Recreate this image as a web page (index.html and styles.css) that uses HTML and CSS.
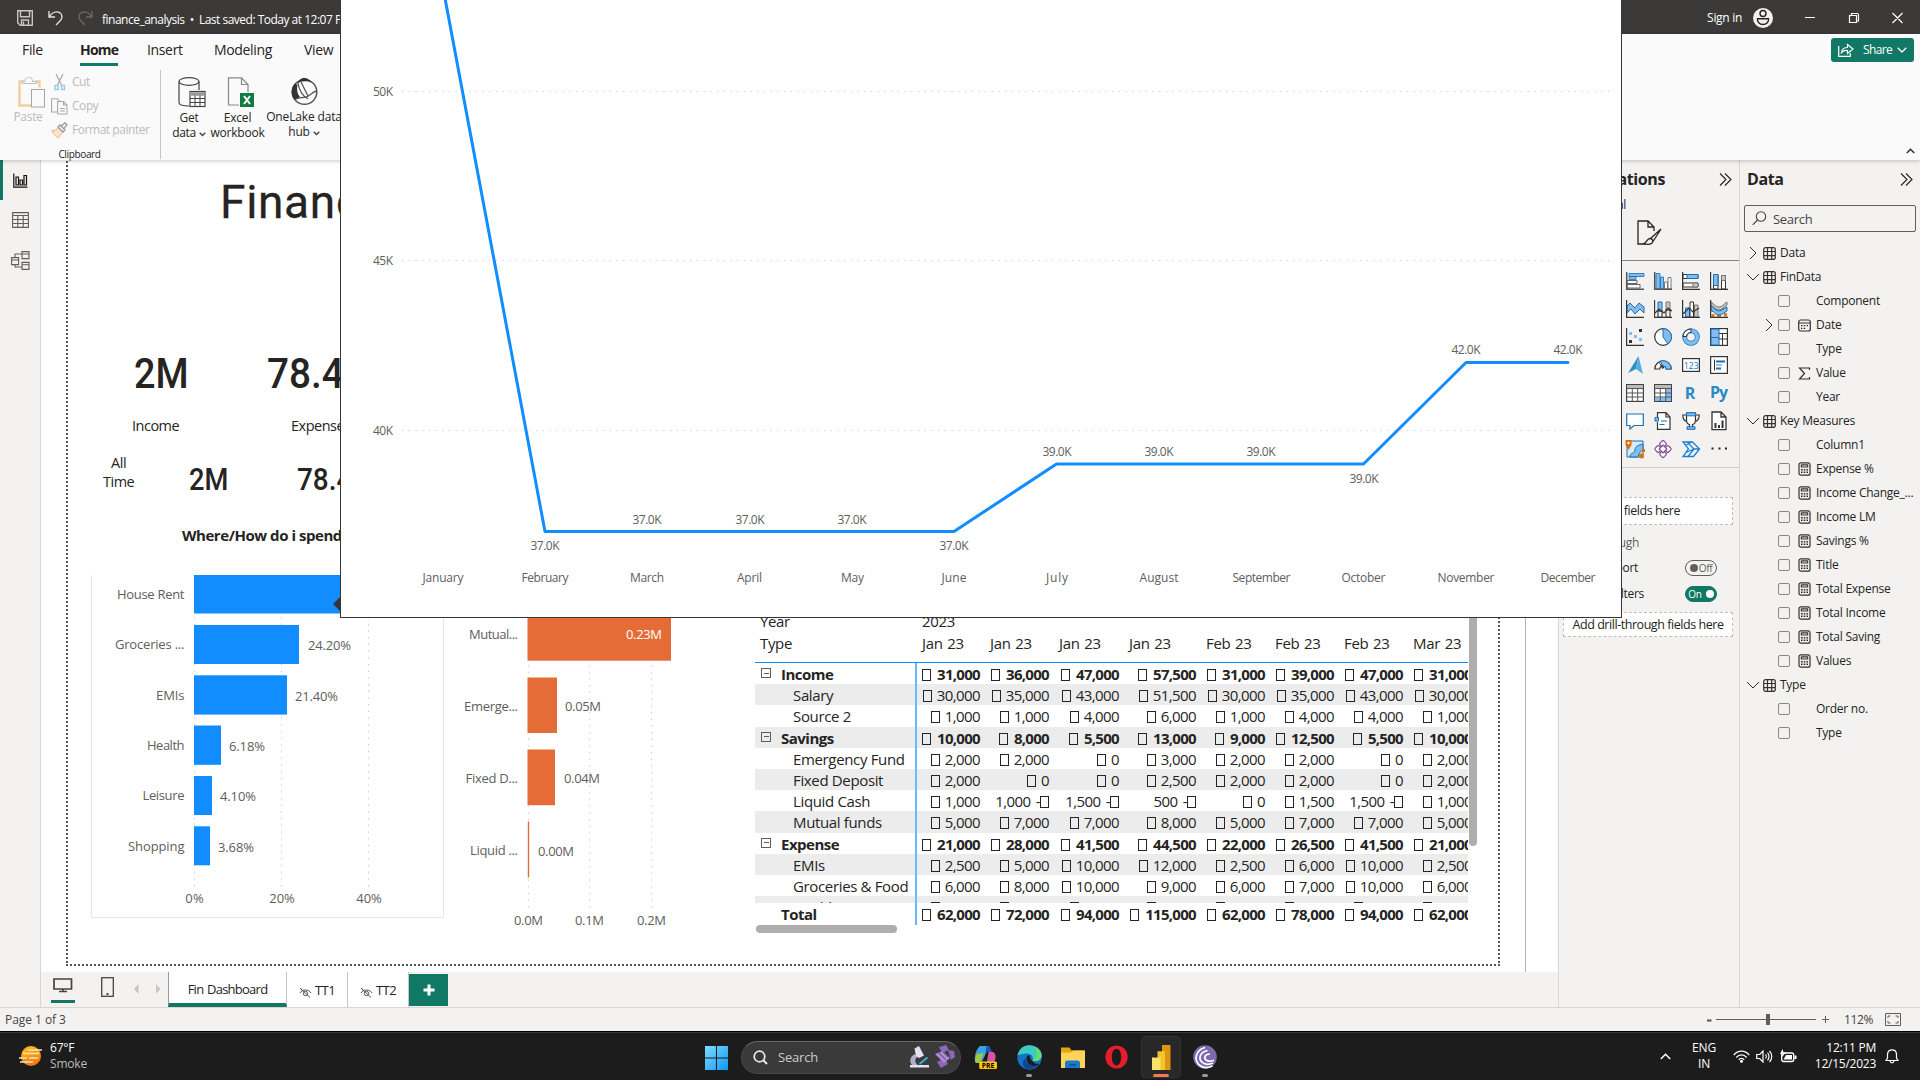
FILE: index.html
```html
<!DOCTYPE html>
<html lang="en">
<head>
<meta charset="utf-8">
<title>finance_analysis</title>
<link rel="stylesheet" href="styles.css">
</head>
<body>
<svg class="defs" width="0" height="0">
  <symbol id="tbl" viewBox="0 0 13 13"><g fill="none" stroke="#323130" stroke-width="1.2"><rect x=".7" y=".7" width="11.6" height="11.6" rx="2"/><path d="M4.5 1v11M8.7 1v11M1 4.5h11M1 8.7h11"/></g></symbol>
  <symbol id="calc" viewBox="0 0 13 14"><g fill="none" stroke="#323130" stroke-width="1.2"><rect x="1" y=".8" width="11" height="12.4" rx="2"/><rect x="3.3" y="2.8" width="6.4" height="2.2" rx=".5"/></g><path d="M3 7h1.6v1.4H3zM5.7 7h1.6v1.4H5.7zM8.4 7H10v1.4H8.400zM3 9.400h1.6v1.6H3zM5.700 9.400h1.6v1.600H5.700zM8.400 9.400H10v1.600H8.400z" fill="#323130"/></symbol>
  <symbol id="down" viewBox="0 0 14 8"><path d="M1 1l6 6 6-6" fill="none" stroke="#323130"/></symbol>
  <symbol id="right" viewBox="0 0 8 14"><path d="M1 1l6 6-6 6" fill="none" stroke="#323130"/></symbol>
  <symbol id="dbl" viewBox="0 0 13 13"><path d="M1 .5l6 6-6 6M6 .5l6 6-6 6" fill="none" stroke="#252423" stroke-width="1.1"/></symbol>
  <symbol id="caret" viewBox="0 0 7 5"><path d="M.7.8l2.800 2.800L6.300.8" fill="none" stroke="#444" stroke-width="1.400"/></symbol>
  <symbol id="hidden" viewBox="0 0 13 11"><g fill="none" stroke="#555" stroke-width="1"><path d="M1 6c2-4 9-4 11 0M3 3.500L1.500 1M1 1l10 9.500"/><circle cx="6.500" cy="6.500" r="2.200"/></g></symbol>
</svg>

<header class="titlebar">
  <svg class="tb-save" width="16" height="16" viewBox="0 0 16 16"><path d="M.7.7h14.600v14.600H3.200L.7 12.800zM3.500.7v6h9v-6M4.500 15v-5h7v5M6.500 11.500V15" fill="none" stroke="#c8c6c4" stroke-width="1.400"/></svg>
  <svg class="tb-undo" width="15" height="16" viewBox="0 0 15 16"><path d="M1 1v6h6M1.500 6.500C4 2.500 8 .8 11.500 2.500c3.500 2 3 6 .5 8.500l-4 4" fill="none" stroke="#e1dfdd" stroke-width="1.400"/></svg>
  <svg class="tb-redo" width="15" height="16" viewBox="0 0 15 16"><path d="M14 1v6H8M13.500 6.500C11 2.500 7 .8 3.500 2.500c-3.500 2-3 6-.5 8.500l4 4" fill="none" stroke="#6a6866" stroke-width="1.400"/></svg>
  <span class="doc">finance_analysis&nbsp; • &nbsp;Last saved: Today at 12:07 PM</span>
  <span class="signin">Sign in</span>
  <svg class="avatar" width="20" height="20" viewBox="0 0 20 20"><circle cx="10" cy="10" r="10" fill="#f3f2f1"/><g fill="none" stroke="#252423" stroke-width="1.400"><circle cx="10" cy="5.500" r="3"/><path d="M4.500 10.800h11c.5 3-2 5.700-5.500 5.700s-6-2.700-5.500-5.700z"/></g></svg>
  <svg class="winctl" width="98" height="12" viewBox="0 0 98 12"><path d="M0 5.500h10M44.500 3.500h7v7h-7zM46.500 3V1.500h5.500q1.500 0 1.500 1.500v6h-2M87.500 1l10 10M97.500 1l-10 10" fill="none" stroke="#fff" stroke-width="1.200"/></svg>
</header>

<section class="ribbon">
  <nav class="menu"><span class="m-file">File</span><span class="m-home">Home</span><span class="m-ins">Insert</span><span class="m-mod">Modeling</span><span>View</span>
    <span class="share"><svg width="16" height="14" viewBox="0 0 16 14"><path d="M.7 3v10.300h11.600V10M3.500 9.500C4 6 6 4.500 9.500 4.500V1.500l5.500 4.500-5.500 4.500v-3C7 7.300 5 7.800 3.500 9.500z" fill="none" stroke="#fff" stroke-width="1.200"/></svg><b>Share</b><svg width="10" height="6" viewBox="0 0 10 6"><path d="M.7.7L5 5 9.300.7" fill="none" stroke="#fff" stroke-width="1.300"/></svg></span>
  </nav>
  <div class="tools">
    <div class="clip">
      <div class="clip-row">
        <div class="paste"><svg width="28" height="31" viewBox="0 0 28 31"><path d="M6 4.500H1.500v24H14M17 4.500h4.500v6" fill="none" stroke="#f3cf9f" stroke-width="2.500"/><path d="M4.500 7.500V5.500h3c0-6 7.500-6 7.500 0h4v2z" transform="translate(-.5 -1)" fill="#fafafa" stroke="#bbb"/><rect x="13.500" y="12.500" width="13" height="17.500" fill="#fafafa" stroke="#a5a5a5"/></svg><span>Paste</span></div>
        <div class="clip-list">
          <span><svg width="17" height="18" viewBox="0 0 17 18"><path d="M5 1l5.500 11M12 1L6.500 12" fill="none" stroke="#aaa" stroke-width="1.300"/><path d="M4 12.500h3v4H4zM10.500 12.500h3v4h-3z" fill="none" stroke="#9bcbea" stroke-width="1.500"/></svg>Cut</span>
          <span><svg width="17" height="17" viewBox="0 0 17 17"><path d="M6 14H.6V.8h5.900l2 2M6.600 3.500h6L16 7v9H6.600zM12.500 3.500V7H16M9 10.500h5M9 13h5" fill="none" stroke="#aaa" stroke-width="1.100"/></svg>Copy</span>
          <span><svg width="17" height="17" viewBox="0 0 17 17"><path d="M.8 8.500c3 .3 5-1 6.500-3L12 10c-2 2-3.500 4-4.500 6C4.500 14.500 2 12 .8 8.500z" fill="#fbe3c8" stroke="#f0b98a"/><path d="M7 5l2-2 5 5-2 2zM10.500 4L14 .8l2 2L13 6.500" fill="#fafafa" stroke="#999" stroke-width="1.300"/></svg>Format painter</span>
        </div>
      </div>
      <div class="clip-label">Clipboard</div>
    </div>
    <div class="big b-get"><svg width="28" height="31" viewBox="0 0 28 31"><ellipse cx="11" cy="4.500" rx="10" ry="3.800" fill="none" stroke="#444" stroke-width="1.200"/><path d="M1 4.500v21c0 2 4 3.500 10 3.500M21 4.500V13" fill="none" stroke="#444" stroke-width="1.200"/><rect x="12" y="14.500" width="15" height="15" fill="#fff" stroke="#444" stroke-width="1.200"/><path d="M12 17h15" stroke="#999" stroke-width="3.500"/><path d="M12 21.500h15M12 25.500h15M17 18.500v11M22 18.500v11" stroke="#444" fill="none"/></svg><span>Get<br>data <svg width="7" height="5"><use href="#caret"/></svg></span></div>
    <div class="big b-xl"><svg width="28" height="31" viewBox="0 0 28 31"><path d="M13 28H2.500V.8h13L22 7.500V15M15.500.8v6.700H22" fill="none" stroke="#888" stroke-width="1.200"/><rect x="14" y="16" width="14" height="14" fill="#107c41"/><path d="M18 19l6 8M24 19l-6 8" stroke="#fff" stroke-width="2"/></svg><span>Excel<br>workbook</span></div>
    <div class="big b-one"><svg width="28" height="30" viewBox="0 0 28 30"><circle cx="14.500" cy="15" r="12.300" fill="#fdfdfd" stroke="#555" stroke-width="1.500"/><path d="M5.500 6.500C1 10 .3 17 4.500 22.500c2 0 4-1 5.500-2.300C7 16.500 6.500 12 7.500 8z" fill="#333"/><path d="M7 6.500C9 2 12 .8 15 1s5 2 6 4.500c-4-2-10-1.500-14 1z" fill="#333"/><path d="M8 6c1 7 5 13 10 16M26.500 14c-4 1-7 5-10.500 6-4 1-8 0-11 2.500M11 5l7 14" fill="none" stroke="#555" stroke-width="1.300"/></svg><span>OneLake data<br>hub <svg width="7" height="5"><use href="#caret"/></svg></span></div>
    <svg class="collapse" width="9" height="6" viewBox="0 0 9 6"><path d="M.8 5l3.700-3.700L8.200 5" fill="none" stroke="#333" stroke-width="1.600"/></svg>
  </div>
</section>

<main class="main">
  <aside class="rail">
    <i class="active"><svg width="15" height="15" viewBox="0 0 15 15"><path d="M.8.5v13.700H14.500M3 12V4h2.500v8zM7 12V7h2.500v5zM11 12V2.500h2.500V12z" fill="none" stroke="#111" stroke-width="1.200"/></svg></i>
    <i><svg width="17" height="16" viewBox="0 0 17 16"><path d="M.6.6h15.800v14.800H.6zM.6 3.500h15.800M.6 7.500h15.800M.6 11.500h15.800M5.800 3.500v12M11.200 3.500v12" fill="none" stroke="#605e5c" stroke-width="1.100"/></svg></i>
    <i><svg width="19" height="19" viewBox="0 0 19 19"><path d="M.6 6.600h7v7h-7zM.6 9h7M11 .6h7v7h-7zM11 3h7M11 11.400h7v7h-7zM11 13.800h7M4 6.500V3h7M4 13.500V16h7" fill="none" stroke="#605e5c" stroke-width="1.100"/></svg></i>
  </aside>

  <section class="work">
    <div class="canvas">
      <div class="page-frame"></div>
      <div class="page-edge"></div>
      <h1 class="v v-title">Finance Dashboard</h1>
      <div class="v din kpi1">2M</div><div class="v din kpi2">78.4%</div>
      <div class="v lbl k1l">Income</div><div class="v lbl k2l">Expense %</div>
      <div class="v lbl alltime">All<br>Time</div>
      <div class="v din sm kpi3">2M</div><div class="v din sm kpi4">78.4%</div>
      <h2 class="v spend">Where/How do i spend money?</h2>

      <svg class="v chart1" width="353" height="344" viewBox="91 575 353 344">
        <path d="M91.500 575v342.500h352V575" fill="none" stroke="#e6e6e6"/>
        <path d="M194.500 617v272M281.500 617v272M368.500 617v272" stroke="#c8c8c8" stroke-dasharray="1.300 5.400" fill="none"/>
        <g fill="#118dff"><rect x="194" y="575" width="200" height="38.500"/><rect x="194" y="625" width="105" height="39"/><rect x="194" y="675.300" width="93" height="39.300"/><rect x="194" y="725.500" width="27" height="39.300"/><rect x="194" y="776" width="18" height="39"/><rect x="194" y="826.300" width="16" height="39"/></g>
        <g class="ax end"><text x="184.500" y="599" textLength="67.500">House Rent</text><text x="184.500" y="649" textLength="69.500">Groceries ...</text><text x="184.500" y="700" textLength="28.500">EMIs</text><text x="184.500" y="750" textLength="37.500">Health</text><text x="184.500" y="800" textLength="42">Leisure</text><text x="184.500" y="851" textLength="56.500">Shopping</text></g>
        <g class="ax"><text x="308" y="650" textLength="43">24.20%</text><text x="295" y="701" textLength="43">21.40%</text><text x="229" y="751" textLength="36">6.18%</text><text x="220" y="801" textLength="36">4.10%</text><text x="218" y="852" textLength="36">3.68%</text></g>
        <g class="ax mid"><text x="194.500" y="903" textLength="18.500">0%</text><text x="282" y="903" textLength="25.500">20%</text><text x="369" y="903" textLength="25.500">40%</text></g>
      </svg>

      <svg class="v chart2" width="230" height="360" viewBox="450 575 230 360">
        <path d="M528.500 665v245M589.700 665v245M651.500 665v245" stroke="#c8c8c8" stroke-dasharray="1.300 5.400" fill="none"/>
        <g fill="#e66c37"><rect x="527.500" y="575" width="143.500" height="85.700"/><rect x="527.500" y="677.500" width="29.500" height="55.500"/><rect x="527.500" y="749.500" width="27.500" height="55.700"/><rect x="527.800" y="821.500" width="1.400" height="56"/></g>
        <g class="ax end"><text x="518" y="639" textLength="49">Mutual...</text><text x="518" y="711" textLength="54">Emerge...</text><text x="518" y="783" textLength="52.500">Fixed D...</text><text x="518" y="855" textLength="48">Liquid ...</text></g>
        <g class="ax"><text x="626" y="639" textLength="36" class="wh">0.23M</text><text x="565" y="711" textLength="36">0.05M</text><text x="564" y="783" textLength="36">0.04M</text><text x="538" y="856" textLength="36">0.00M</text></g>
        <g class="ax mid"><text x="528.500" y="925" textLength="29">0.0M</text><text x="589.500" y="925" textLength="29">0.1M</text><text x="651.500" y="925" textLength="29">0.2M</text></g>
      </svg>

      <div class="v matrix">
        <div class="grid">
          <div class="r head"><b>Year</b><span>2023</span></div>
          <div class="r head types"><b>Type</b><span>Jan 23</span><span>Jan 23</span><span>Jan 23</span><span>Jan 23</span><span>Feb 23</span><span>Feb 23</span><span>Feb 23</span><span>Mar 23</span></div>
          <div class="body">
          <div class="r bold"><b><u></u>Income</b><span><i></i> 31,000</span><span><i></i> 36,000</span><span><i></i> 47,000</span><span><i></i> 57,500</span><span><i></i> 31,000</span><span><i></i> 39,000</span><span><i></i> 47,000</span><span><i></i> 31,000</span></div>
          <div class="r alt"><b>Salary</b><span><i></i> 30,000</span><span><i></i> 35,000</span><span><i></i> 43,000</span><span><i></i> 51,500</span><span><i></i> 30,000</span><span><i></i> 35,000</span><span><i></i> 43,000</span><span><i></i> 30,000</span></div>
          <div class="r"><b>Source 2</b><span><i></i> 1,000</span><span><i></i> 1,000</span><span><i></i> 4,000</span><span><i></i> 6,000</span><span><i></i> 1,000</span><span><i></i> 4,000</span><span><i></i> 4,000</span><span><i></i> 1,000</span></div>
          <div class="r bold alt"><b><u></u>Savings</b><span><i></i> 10,000</span><span><i></i> 8,000</span><span><i></i> 5,500</span><span><i></i> 13,000</span><span><i></i> 9,000</span><span><i></i> 12,500</span><span><i></i> 5,500</span><span><i></i> 10,000</span></div>
          <div class="r"><b>Emergency Fund</b><span><i></i> 2,000</span><span><i></i> 2,000</span><span><i></i> 0</span><span><i></i> 3,000</span><span><i></i> 2,000</span><span><i></i> 2,000</span><span><i></i> 0</span><span><i></i> 2,000</span></div>
          <div class="r alt"><b>Fixed Deposit</b><span><i></i> 2,000</span><span><i></i> 0</span><span><i></i> 0</span><span><i></i> 2,500</span><span><i></i> 2,000</span><span><i></i> 2,000</span><span><i></i> 0</span><span><i></i> 2,000</span></div>
          <div class="r"><b>Liquid Cash</b><span><i></i> 1,000</span><span>1,000 -<i></i></span><span>1,500 -<i></i></span><span>500 -<i></i></span><span><i></i> 0</span><span><i></i> 1,500</span><span>1,500 -<i></i></span><span><i></i> 1,000</span></div>
          <div class="r alt"><b>Mutual funds</b><span><i></i> 5,000</span><span><i></i> 7,000</span><span><i></i> 7,000</span><span><i></i> 8,000</span><span><i></i> 5,000</span><span><i></i> 7,000</span><span><i></i> 7,000</span><span><i></i> 5,000</span></div>
          <div class="r bold"><b><u></u>Expense</b><span><i></i> 21,000</span><span><i></i> 28,000</span><span><i></i> 41,500</span><span><i></i> 44,500</span><span><i></i> 22,000</span><span><i></i> 26,500</span><span><i></i> 41,500</span><span><i></i> 21,000</span></div>
          <div class="r alt"><b>EMIs</b><span><i></i> 2,500</span><span><i></i> 5,000</span><span><i></i> 10,000</span><span><i></i> 12,000</span><span><i></i> 2,500</span><span><i></i> 6,000</span><span><i></i> 10,000</span><span><i></i> 2,500</span></div>
          <div class="r"><b>Groceries &amp; Food</b><span><i></i> 6,000</span><span><i></i> 8,000</span><span><i></i> 10,000</span><span><i></i> 9,000</span><span><i></i> 6,000</span><span><i></i> 7,000</span><span><i></i> 10,000</span><span><i></i> 6,000</span></div>
          <div class="r alt"><b>Health</b><span><i></i> 1,000</span><span><i></i> 2,000</span><span><i></i> 2,000</span><span><i></i> 2,000</span><span><i></i> 1,000</span><span><i></i> 1,500</span><span><i></i> 2,000</span><span><i></i> 1,000</span></div>
          </div>
          <div class="r bold total"><b>Total</b><span><i></i> 62,000</span><span><i></i> 72,000</span><span><i></i> 94,000</span><span><i></i> 115,000</span><span><i></i> 62,000</span><span><i></i> 78,000</span><span><i></i> 94,000</span><span><i></i> 62,000</span></div>
        </div>
        <div class="vscroll"></div>
        <div class="hscroll"></div>
      </div>
    </div>
    <footer class="tabs">
      <span class="view desk"><svg width="20" height="15" viewBox="0 0 20 15"><path d="M1 1h17.500v10H1zM6 13.500h8M10 11v2.500" fill="none" stroke="#444" stroke-width="1.700"/></svg></span>
      <svg class="phone" width="13" height="20" viewBox="0 0 13 20"><rect x=".7" y=".7" width="11.600" height="18.600" fill="none" stroke="#444" stroke-width="1.300"/><path d="M5.500 16h2v2h-2z" fill="#444"/></svg>
      <svg class="arrows" width="27" height="10" viewBox="0 0 27 10"><path d="M4.500 0v10L0 5zM22 0v10l4.500-5z" fill="#c8c6c4"/></svg>
      <span class="tab on">Fin Dashboard</span>
      <span class="tab"><svg width="13" height="11"><use href="#hidden"/></svg>TT1</span>
      <span class="tab"><svg width="13" height="11"><use href="#hidden"/></svg>TT2</span>
      <span class="add"><svg width="12" height="12" viewBox="0 0 12 12"><path d="M6 .5v11M.5 6h11" stroke="#fff" stroke-width="3"/></svg></span>
    </footer>
  </section>

  <aside class="vis">
    <div class="pane-head"><b>Visualizations</b><svg width="13" height="13"><use href="#dbl"/></svg></div>
    <div class="build">Build visual</div>
    <div class="fmt"><svg width="25" height="25" viewBox="0 0 25 25"><path d="M9 24H1V1h10l6 6v4M11 1v6h6" fill="none" stroke="#252423" stroke-width="1.300"/><path d="M24 9L13 19M24 9l-8 12.500M13 18.500c-3 0-3.500 4-6 5 4 1.500 8.500 1 9-2.500-.5-1.500-1.500-2.500-3-2.500z" fill="#f3f2f1" stroke="#252423" stroke-width="1.300"/></svg></div>
    <div class="icons">
      <svg viewBox="0 0 18 18"><path d="M3 1.500h15v3H3zM3 4.500h7v3H3z" fill="#83bdf0" stroke="#1a6fb5" stroke-width=".8"/><path d="M1 8.500h10v3H1zM1 12.500h13v3.500H1z" fill="#fff" stroke="#666"/><path d="M.7 0v17.300H18" fill="none" stroke="#555" stroke-width="1.500"/></svg>
      <svg viewBox="0 0 18 18"><path d="M2 1.500h4V17H2zM6.500 5h3v12h-3z" fill="#83bdf0" stroke="#1a6fb5" stroke-width=".8"/><path d="M10.500 10h3v7h-3zM14 5.500h3V17h-3z" fill="#fff" stroke="#777"/><path d="M.7 0v17.300H18" fill="none" stroke="#555" stroke-width="1.500"/></svg>
      <svg viewBox="0 0 18 18"><path d="M4 2.500h12v4H1v-4zM4 11h12v4H1v-4z" fill="#fff" stroke="#333"/><path d="M5 2.500h11v4H5z" fill="#83bdf0" stroke="#1a6fb5"/><path d="M11 11h5v4h-5z" fill="#c8c6c4" stroke="#777"/><path d="M.6 0v17.400H18" fill="none" stroke="#333" stroke-width="1.200"/></svg>
      <svg viewBox="0 0 18 18"><path d="M3.500 2.500h4.500V17H3.500zM11.500 3.500h4V17h-4z" fill="#fff" stroke="#333"/><path d="M3.500 2.500H8v11H3.500z" fill="#83bdf0" stroke="#1a6fb5"/><path d="M11.500 3.500h4v5h-4z" fill="#c8c6c4" stroke="#777"/><path d="M.6 0v17.400H18" fill="none" stroke="#333" stroke-width="1.200"/></svg>

      <svg viewBox="0 0 18 18"><path d="M1 6l3-3 5 5 4-5 5 4v6l-4-4-5 5-4-5-4 4z" fill="#83bdf0" stroke="#1a6fb5"/><path d="M.6 0v17.400H18" fill="none" stroke="#333" stroke-width="1.200"/></svg>
      <svg viewBox="0 0 18 18"><path d="M4 2h4v9H4z" fill="#83bdf0" stroke="#1a6fb5"/><path d="M12 2h4v8h-4z" fill="#c8c6c4" stroke="#777"/><path d="M4 11h4v6H4zM12 10h4v7h-4zM.6 0v17.400H18" fill="none" stroke="#333" stroke-width="1.100"/><path d="M1 13l4-4 5 4 4-5 4 3" fill="none" stroke="#333" stroke-width="1.200"/></svg>
      <svg viewBox="0 0 18 18"><path d="M3.500 8h4v9h-4z" fill="#83bdf0" stroke="#1a6fb5"/><path d="M8 2h3.500v15H8z" fill="#fff" stroke="#333"/><path d="M12.500 5h3.500v12h-3.500z" fill="#c8c6c4" stroke="#777"/><path d="M1 14l6-6 4 4 6-4M.6 0v17.400H18" fill="none" stroke="#333" stroke-width="1.200"/></svg>
      <svg viewBox="0 0 18 18"><path d="M1.500 8.500h5V12h-5zM1.500 14h3v3h-3zM12 8h5v3h-5zM14 13h3v3.500h-3zM7 12h4v5H7z" fill="#e07a1a"/><path d="M1 2c4 3 5 5 8 5s5-3 8-5v3c-3 2-5 5-8 5S5 8 1 5z" fill="#c8c6c4" stroke="#777"/><path d="M1 6c3 2 5 5 8 5s5-3 8-4v4c-3 1-4 4-8 4s-5-4-8-5z" fill="#83bdf0" stroke="#1a6fb5"/><path d="M.6 0v17.400H18" fill="none" stroke="#333" stroke-width="1.200"/></svg>

      <svg viewBox="0 0 18 18"><path d="M3 4h3v3H3zM8 7h3v3H8zM13 10h3v3h-3z" fill="#83bdf0"/><path d="M13 1h3v3h-3zM3 12h3v3H3z" fill="#333"/><path d="M.6 0v17.400H18" fill="none" stroke="#333" stroke-width="1.200"/></svg>
      <svg viewBox="0 0 18 18"><circle cx="9" cy="9" r="8.300" fill="#fff" stroke="#333" stroke-width="1.200"/><path d="M9 .7a8.300 8.300 0 0 1 5 15L9 9z" fill="#83bdf0" stroke="#1a6fb5"/></svg>
      <svg viewBox="0 0 18 18"><circle cx="9" cy="9" r="6.300" fill="none" stroke="#1a6fb5" stroke-width="5"/><circle cx="9" cy="9" r="6.300" fill="none" stroke="#83bdf0" stroke-width="3.500"/><path d="M1 8.500A8 8 0 0 1 9 1v3.500a4 4 0 0 0-4.500 4z" fill="#fff" stroke="#333"/></svg>
      <svg viewBox="0 0 18 18"><rect x=".6" y=".6" width="16.800" height="16.800" fill="#fff" stroke="#333" stroke-width="1.200"/><path d="M1 1h8v16H1z" fill="#83bdf0" stroke="#1a6fb5"/><path d="M1 9.500h8" stroke="#1a6fb5"/><path d="M9 5.500h8M12.500 5.500V17M9 11h8" stroke="#333" fill="none"/></svg>

      <svg viewBox="0 0 18 18"><path d="M12.500 0L2 17l8-4z" fill="#2b8fc9"/><path d="M12.500 0L17 18l-7-5z" fill="#54b0dd"/></svg>
      <svg viewBox="0 0 18 18"><path d="M.8 13A8.200 8.200 0 0 1 17.200 13h-5a3.200 3.200 0 0 0-6.400 0z" fill="#fff" stroke="#333" stroke-width="1.200"/><path d="M6 5.300A8.200 8.200 0 0 1 17.200 13h-5a3.200 3.200 0 0 0-3-3z" fill="#83bdf0" stroke="#1a6fb5"/><path d="M4.500 6l4 7 2-1.500z" fill="#333"/></svg>
      <svg viewBox="0 0 18 18"><rect x=".6" y="2.600" width="16.800" height="12.800" fill="#fff" stroke="#333" stroke-width="1.200"/><text x="9" y="12.500" text-anchor="middle" class="n123">123</text></svg>
      <svg viewBox="0 0 18 18"><rect x=".6" y=".6" width="16.800" height="16.800" fill="#fff" stroke="#333" stroke-width="1.200"/><path d="M4.500 3.500v11" stroke="#333"/><path d="M6 5.500h9M6 12.500h5" stroke="#1a6fb5" stroke-width="1.800"/><path d="M6 9h6" stroke="#83bdf0" stroke-width="1.800"/></svg>

      <svg viewBox="0 0 18 18"><rect x=".6" y=".6" width="16.800" height="16.800" fill="#fff" stroke="#444" stroke-width="1.200"/><path d="M1 2.500h16" stroke="#bbb" stroke-width="3"/><path d="M1 4.500h16M1 9h16M1 13h16M6.300 4v13M11.700 4v13" stroke="#555" fill="none"/></svg>
      <svg viewBox="0 0 18 18"><rect x=".6" y=".6" width="16.800" height="16.800" fill="#fff" stroke="#444" stroke-width="1.200"/><path d="M12 4.500h5V17H1v-3.500h11z" fill="#83bdf0"/><path d="M1 2.500h16" stroke="#bbb" stroke-width="3"/><path d="M1 4.500h16M1 9h16M1 13h16M6.300 4v13M11.700 4v13" stroke="#555" fill="none"/></svg>
      <svg viewBox="0 0 18 18"><text x="8" y="14.500" text-anchor="middle" class="rpy">R</text></svg>
      <svg viewBox="0 0 18 18"><text x="9" y="14" text-anchor="middle" class="rpy" textLength="18">Py</text></svg>

      <svg viewBox="0 0 18 18"><path d="M.7 2h16.600v11.500H8L4 17v-3.500H.7z" fill="#fff" stroke="#1a6fb5" stroke-width="1.200"/></svg>
      <svg viewBox="0 0 18 18"><path d="M3.500 5V.7H12L16 5v12.300H3.500V10M12 .7V5h4" fill="#fff" stroke="#333" stroke-width="1.200"/><path d="M1 5.500h3.500V9H1z" fill="#83bdf0" stroke="#1a6fb5"/><path d="M7 9h6M5.500 12.500h5" stroke="#1a6fb5"/></svg>
      <svg viewBox="0 0 18 18"><path d="M4.500 3H.8c0 4 1 6 4.500 6.500M13.500 3h3.700c0 4-1 6-4.500 6.500M4.500 1h9v7c0 4-3 4.500-3 4.500v3h-3v-3s-3-.5-3-4.500z" fill="#fff" stroke="#333" stroke-width="1.200"/><path d="M4.500.8h9v3h-9zM5 14.800h8v2.500H5z" fill="#83bdf0" stroke="#1a6fb5"/></svg>
      <svg viewBox="0 0 18 18"><path d="M2 0h9l5 5v12.700H2zM11 0v5h5" fill="#fff" stroke="#333" stroke-width="1.300"/><path d="M4.500 11h2v5h-2zM8 13h2v3H8zM11.500 8.500h2V16h-2z" fill="#333"/></svg>

      <svg viewBox="0 0 18 18"><path d="M1 1h16v16H1z" fill="#d6eaf8" stroke="#1a6fb5"/><path d="M4 17c0-5 5-3 5-7s4-5 8-6v6c-4 1-4 7-6 7z" fill="#83bdf0" stroke="#1a6fb5"/><path d="M-.5 0h6v5L2.500 10l-3-5z" fill="#d9700f"/><circle cx="2.500" cy="3" r="1.200" fill="#fff"/><circle cx="15.500" cy="16" r="2.500" fill="#d9700f"/><path d="M16 9h3v3h-3z" fill="#d9700f"/></svg>
      <svg viewBox="0 0 18 18"><g fill="#fff" stroke="#8a4a94" stroke-width="1.200"><rect x="6.300" y="1.200" width="5.400" height="5.400" rx="1.200" transform="rotate(45 9 3.900) translate(0 0)"/><rect x="1.500" y="6.300" width="5.400" height="5.400" rx="1.200" transform="rotate(45 4.200 9)"/><rect x="11.100" y="6.300" width="5.400" height="5.400" rx="1.200" transform="rotate(45 13.800 9)"/><rect x="6.300" y="11.400" width="5.400" height="5.400" rx="1.200" transform="rotate(45 9 14.100)"/><rect x="6.300" y="6.300" width="5.400" height="5.400" transform="rotate(45 9 9)"/></g></svg>
      <svg viewBox="0 0 18 18"><path d="M1 2h9.500l7 7-6 7.500H1l5.500-7.500zM5 2l7 7-6 7.500M10 2L4 5M17 9h-6M12 9l-7 3" fill="none" stroke="#1a7fd4" stroke-width="1.300"/></svg>
      <svg viewBox="0 0 18 18"><path d="M1.500 7.500h2v2h-2zM8.500 7.500h2v2h-2zM15 7.500h2v2h-2z" fill="#222"/></svg>
    </div>
    <div class="values">Values</div>
    <div class="well w1">Add data fields here</div>
    <div class="drill">Drill through</div>
    <div class="opt"><span>Cross-report</span><span class="tog off"><i></i>Off</span></div>
    <div class="opt o2"><span>Keep all filters</span><span class="tog on">On<i></i></span></div>
    <div class="well w2">Add drill-through fields here</div>
  </aside>

  <aside class="data">
    <div class="pane-head"><b>Data</b><svg width="13" height="13"><use href="#dbl"/></svg></div>
    <div class="search"><svg width="15" height="15" viewBox="0 0 15 15"><circle cx="9" cy="5.500" r="4.700" fill="none" stroke="#444" stroke-width="1.100"/><path d="M5.500 9L.7 13.800" stroke="#444" stroke-width="1.100"/></svg>Search</div>
    <ul class="tree">
      <li class="t"><svg class="chv" viewBox="-3 0 14 14"><use href="#right" width="8" height="14"/></svg><svg class="ti"><use href="#tbl"/></svg>Data</li>
      <li class="t"><svg class="chv" viewBox="0 -3 14 14"><use href="#down" width="14" height="8"/></svg><svg class="ti"><use href="#tbl"/></svg>FinData</li>
      <li><i></i><em></em>Component</li>
      <li class="exp"><svg width="8" height="14"><use href="#right"/></svg><i></i><em><svg width="13" height="13" viewBox="0 0 13 13"><rect x=".7" y="1" width="11.600" height="11" rx="2" fill="none" stroke="#323130" stroke-width="1.200"/><path d="M1 4h11" stroke="#323130"/><path d="M3 6h1.500v1.300H3zM5.700 6h1.500v1.300H5.700zM8.500 6H10v1.300H8.500zM3 8.700h1.500V10H3zM5.700 8.700h1.500V10H5.700z" fill="#323130"/></svg></em>Date</li>
      <li><i></i><em></em>Type</li>
      <li><i></i><em><svg width="13" height="13" viewBox="0 0 13 13"><path d="M11.500 3V1H1.500l5 5.500-5 5.500h10V10" fill="none" stroke="#323130" stroke-width="1.200"/></svg></em>Value</li>
      <li><i></i><em></em>Year</li>
      <li class="t"><svg class="chv" viewBox="0 -3 14 14"><use href="#down" width="14" height="8"/></svg><svg class="ti"><use href="#tbl"/></svg>Key Measures</li>
      <li><i></i><em></em>Column1</li>
      <li><i></i><em><svg width="13" height="14"><use href="#calc"/></svg></em>Expense %</li>
      <li><i></i><em><svg width="13" height="14"><use href="#calc"/></svg></em>Income Change_...</li>
      <li><i></i><em><svg width="13" height="14"><use href="#calc"/></svg></em>Income LM</li>
      <li><i></i><em><svg width="13" height="14"><use href="#calc"/></svg></em>Savings %</li>
      <li><i></i><em><svg width="13" height="14"><use href="#calc"/></svg></em>Title</li>
      <li><i></i><em><svg width="13" height="14"><use href="#calc"/></svg></em>Total Expense</li>
      <li><i></i><em><svg width="13" height="14"><use href="#calc"/></svg></em>Total Income</li>
      <li><i></i><em><svg width="13" height="14"><use href="#calc"/></svg></em>Total Saving</li>
      <li><i></i><em><svg width="13" height="14"><use href="#calc"/></svg></em>Values</li>
      <li class="t"><svg class="chv" viewBox="0 -3 14 14"><use href="#down" width="14" height="8"/></svg><svg class="ti"><use href="#tbl"/></svg>Type</li>
      <li><i></i><em></em>Order no.</li>
      <li><i></i><em></em>Type</li>
    </ul>
  </aside>
</main>

<div class="status"><span class="pg">Page 1 of 3</span>
  <svg width="123" height="13" viewBox="0 0 123 13"><path d="M0 7.500h4.500" stroke="#555" stroke-width="2"/><path d="M9 6.500h100M115 6.500h7M118.500 3v7" stroke="#605e5c"/><path d="M59 1h4v11h-4z" fill="#605e5c"/></svg>
  <span class="pct">112%</span>
  <svg class="fit" width="16" height="13" viewBox="0 0 16 13"><path d="M.5.500h15v12H.5zM3 5V3h2.500M10.500 3H13v2M13 8v2h-2.500M5.500 10H3V8" fill="none" stroke="#605e5c"/></svg>
</div>

<footer class="taskbar">
  <svg class="sun" width="24" height="22" viewBox="0 0 24 22"><defs><linearGradient id="sg" x1="0" y1="0" x2=".3" y2="1"><stop offset="0" stop-color="#ffc61a"/><stop offset="1" stop-color="#f07a13"/></linearGradient></defs><circle cx="12" cy="11" r="10" fill="url(#sg)"/><path d="M9 5h14M4 8.500h16M0 13h8M10 13h9M1 17h13" stroke="#f5e3b5" stroke-width="1.700"/></svg>
  <div class="weather">67°F<br><span>Smoke</span></div>
  <svg class="start" width="23" height="24" viewBox="0 0 22 23" preserveAspectRatio="none"><defs><linearGradient id="wg" x1="0" y1="0" x2="1" y2="1"><stop offset="0" stop-color="#7fdcff"/><stop offset="1" stop-color="#0f97f5"/></linearGradient></defs><path d="M0 0h10.500v11H0zM11.500 0H22v11H11.500zM0 12h10.500v11H0zM11.500 12H22v11H11.500z" fill="url(#wg)"/></svg>
  <div class="tsearch"><svg width="15" height="15" viewBox="0 0 15 15"><circle cx="6.500" cy="6.500" r="5.300" fill="none" stroke="#e8e8e8" stroke-width="1.700"/><path d="M10.500 10.500L14 14" stroke="#e8e8e8" stroke-width="1.900"/></svg><span>Search</span>
    <svg width="46" height="24" viewBox="0 0 46 24"><path d="M1 20h19v2.500H1z" fill="#e6e0ee"/><path d="M3 20c-3.500-4-1.500-9 3-11l2.500 3c-3 1.500-3 5 0 8z" fill="#b3aecb"/><path d="M5.500 3.500L10 1l5 9.500-5 2.500-3-2z" fill="#e5dff0"/><path d="M10.500 19l8-6.500" stroke="#35b2ea" stroke-width="1.800"/><path d="M30 2l7-2 3 5-7 3zM39 5l6 1 1 6-4 3zM28 17l8-4 3 6-7 4z" fill="#8f66bd"/><path d="M26 9l8-3 7 7-6 5z" fill="#a98bd0"/><path d="M34 7l5 5M30 8l7 7" stroke="#5c3d8a"/></svg></div>
  <svg class="cop" width="23" height="24" viewBox="0 0 22 24" preserveAspectRatio="none"><path d="M6 1h8l3 6h-5L7 18H2C-1 15 2 3 6 1z" fill="#37a6dc"/><path d="M3 9l6-1-3 10H2C0 16 1 12 3 9z" fill="#a3c641"/><path d="M12 1c4 0 4 3 5 6h-6z" fill="#1857b8"/><path d="M14 7h4c4 1 3 9 0 12h-6z" fill="#d955a4"/><rect x="5" y="16.500" width="17" height="7.500" rx="1.500" fill="#ffc60a"/><text x="13.500" y="22.700" text-anchor="middle" class="pre">PRE</text></svg>
  <svg class="edge" width="25" height="25" viewBox="0 0 24 24"><circle cx="12" cy="12" r="11.700" fill="#1672c8"/><path d="M.5 10C2 3 7 .3 12 .3c7 0 12 5 11.700 10-.5 5-6 6-9 4.500 1-1.500 1-6-4-6.500-4-.5-8 1-10.200 1.700z" fill="#3ccac4"/><path d="M16 1.200c6 3 8 7 7.500 10-.8 3.500-5 5-8.500 3.600 5-3 5-9 1-13.600z" fill="#64dc6e"/><path d="M8 13c0 5 5 7 13 5-5 7-13 6-15 2-1-3 0-6 2-7z" fill="#0b468e"/><path d="M14.500 14.800c-3-2-1-4-3-5-3-.5-4 6 1 9 4 2 7 1 9-.8-3 .5-6-1-7-3.200z" fill="#1c1c1c"/></svg>
  <svg class="files" width="24" height="23" viewBox="0 0 24 22"><path d="M0 1h8.500l2 3h13v17H0z" fill="#e7a50f"/><path d="M0 6h10l2-2h12v17.500H0z" fill="#ffd45b"/><path d="M4 16.500q0-2.500 2.500-2.500h10q2.500 0 2.500 2.500v5H4z" fill="#1b79cc"/><path d="M8.500 17.500h6.500v1.500H8.500z" fill="#0b4f94"/></svg>
  <svg class="opera" width="23" height="24" viewBox="0 0 22 23"><path d="M11 .5a10.700 11 0 1 0 .1 0zM11 3.500c3 0 4.500 4 4.500 8s-1.500 8-4.500 8-4.500-4-4.500-8 1.500-8 4.500-8z" fill="#e81c2c" fill-rule="evenodd"/></svg>
  <div class="pbi"><svg width="19" height="25" viewBox="0 0 19 24" preserveAspectRatio="none"><path d="M10 0h8.500v24H10z" fill="#dd9512"/><path d="M5.500 6H13v18H5.500z" fill="#f3c42e"/><path d="M0 12h8.500v12H0z" fill="#fbe06a"/></svg></div>
  <svg class="bit" width="24" height="24" viewBox="0 0 24 24"><circle cx="12" cy="12" r="11.800" fill="#7d6bb0"/><g fill="none" stroke="#fff" stroke-width="1.700"><path d="M12 2.500C3 5 0 15 7 20.500c3 2.500 8 2.500 12.500.5"/><path d="M14.500 5.500C7 7 5 13.500 9 17.200c3 2.800 7.500 2.300 11 .8"/><path d="M17 9c-5 0-6.500 3.500-4 6 2 1.600 5 1.300 8 .2"/></g></svg>
  <div class="tray">
    <svg class="up" width="11" height="7" viewBox="0 0 11 7"><path d="M.8 6l4.700-4.700L10.200 6" fill="none" stroke="#fff" stroke-width="1.500"/></svg>
    <div class="lang">ENG<br>IN</div>
    <svg class="wifi" width="17" height="13" viewBox="0 0 17 13"><g fill="none" stroke="#fff" stroke-width="1.300"><path d="M.8 5C5-.2 12-.2 16.200 5M3.300 7.500c3-3.500 7.400-3.500 10.400 0M5.800 9.700c1.600-1.800 3.800-1.800 5.400 0"/></g><circle cx="8.500" cy="11.200" r="1.500" fill="#fff"/></svg>
    <svg class="spk" width="17" height="13" viewBox="0 0 17 13"><path d="M.7 4.500h3L7 1v11L3.700 8.500h-3zM9.500 4.500c1 1 1 3 0 4M11.500 2.700c2 2 2 5.600 0 7.600M13.500 1c3 3 3 8 0 11" fill="none" stroke="#fff" stroke-width="1.200"/></svg>
    <svg class="bat" width="17" height="14" viewBox="0 0 17 14"><rect x="1.700" y="4" width="12" height="8.500" rx="2" fill="none" stroke="#fff" stroke-width="1.300"/><path d="M6 6h6v4.500H3.500zM14.500 6.500h2v3.500h-2zM2.500 0L0 5h2.500L1.500 8.500 6 3.500H3.500z" fill="#fff"/></svg>
    <div class="clock">12:11 PM<br>12/15/2023</div>
    <svg class="bell" width="14" height="15" viewBox="0 0 14 15"><path d="M1 11.500L2.500 9V5.500C2.500 2.500 4.500.8 7 .8s4.500 1.700 4.500 4.700V9l1.500 2.500zM5 12c.5 2.500 3.500 2.500 4 0" fill="none" stroke="#fff" stroke-width="1.200"/></svg>
  </div>
  <b class="ind i1"></b><b class="ind i2"></b><b class="ind i3"></b>
</footer>

<div class="tip">
  <svg width="1281" height="617" viewBox="341 0 1281 617">
    <path d="M402 91.500h1210M402 260.500h1210M402 430.500h1210" stroke="#d0d0d0" stroke-dasharray="1.300 5.400" fill="none"/>
    <path d="M442.700-14L545 531.500H954L1056.500 464H1363.500L1466 362.500H1568" fill="none" stroke="#118dff" stroke-width="3" stroke-linejoin="round" stroke-linecap="round"/>
    <g class="lb end"><text x="393" y="96" textLength="20">50K</text><text x="393" y="265" textLength="20">45K</text><text x="393" y="434.500" textLength="20">40K</text></g>
    <g class="lb mid"><text x="545" y="550" textLength="29">37.0K</text><text x="647" y="523.500" textLength="29">37.0K</text><text x="750" y="523.500" textLength="29">37.0K</text><text x="852" y="523.500" textLength="29">37.0K</text><text x="954" y="550" textLength="29">37.0K</text><text x="1057" y="456" textLength="29">39.0K</text><text x="1159" y="456" textLength="29">39.0K</text><text x="1261" y="456" textLength="29">39.0K</text><text x="1364" y="483" textLength="29">39.0K</text><text x="1466" y="354" textLength="29">42.0K</text><text x="1568" y="354" textLength="29">42.0K</text>
    <text x="443" y="582" textLength="41">January</text><text x="545" y="582" textLength="47">February</text><text x="647" y="582" textLength="34">March</text><text x="749.500" y="582" textLength="25">April</text><text x="852.500" y="582" textLength="23">May</text><text x="954" y="582" textLength="25">June</text><text x="1057" y="582" textLength="22">July</text><text x="1159" y="582" textLength="39">August</text><text x="1261.500" y="582" textLength="58">September</text><text x="1363.500" y="582" textLength="44">October</text><text x="1466" y="582" textLength="57">November</text><text x="1568" y="582" textLength="55">December</text></g>
  </svg>
</div>
<div class="tip-arrow"></div>
</body>
</html>
```
FILE: styles.css
```css
* { box-sizing: border-box; }
body { margin: 0; width: 1920px; height: 1080px; overflow: hidden; display: flex; flex-direction: column; position: relative; font: 12px/16px "Open Sans", "Noto Sans", sans-serif; letter-spacing: -0.3px; color: #252423; background: #fff; }
svg { display: block; flex: none; }
.defs { position: absolute; }
span, b, h1, h2 { white-space: nowrap; }

.titlebar { height: 34px; flex: none; background: #3b3a39; color: #fff; display: flex; align-items: center; padding-top: 2px; }
.tb-save { margin-left: 17px; }
.tb-undo { margin-left: 15px; }
.tb-redo { margin-left: 15px; }
.doc { margin-left: 9px; padding-top: 3px; width: 300px; letter-spacing: -.5px; }
.signin { margin-left: auto; }
.avatar { margin-left: 11px; }
.winctl { margin: 0 17px 0 32px; }

.ribbon { height: 126px; flex: none; background: #fafafa; display: flex; flex-direction: column; box-shadow: 0 1px 4px rgba(0,0,0,.22); position: relative; z-index: 2; }
.menu { height: 33px; display: flex; padding: 4px 6px 0 22px; font-size: 14px; line-height: 24px; letter-spacing: -0.35px; }
.m-file { width: 58px; }
.m-home { width: 38px; margin-right: 29px; font-weight: 700; letter-spacing: -0.8px; border-bottom: 3px solid #117865; height: 28px; }
.m-ins { width: 67px; }
.m-mod { width: 90px; }
.share { margin-left: auto; width: 83px; height: 24px; background: #117865; border-radius: 3px; color: #fff; display: flex; align-items: center; padding: 0 8px 0 7px; font-size: 12px; }
.share b { font-weight: 400; margin: 0 5px 0 9px; letter-spacing: -0.6px; }
.tools { flex: 1; display: flex; position: relative; }
.clip { width: 161px; height: 89px; margin-top: 3px; border-right: 1px solid #c8c6c4; color: #bdbbb9; }
.clip-row { display: flex; }
.paste { width: 34px; margin-left: 12px; padding-top: 7px; display: flex; flex-direction: column; align-items: center; }
.paste svg { margin-left: 5px; }
.paste span { margin-top: 1px; margin-left: -2px; }
.clip-list { display: flex; flex-direction: column; margin-left: 5px; letter-spacing: -.45px; }
.clip-list span { height: 24.200px; display: flex; align-items: center; gap: 4px; }
.clip-label { color: #252423; font-size: 10px; text-align: center; margin-top: 3px; margin-left: -1px; letter-spacing: -.35px; }
.big { text-align: center; line-height: 15px; padding-top: 10px; display: flex; flex-direction: column; align-items: center; }
.big > span { margin-top: 2px; }
.big span svg { display: inline-block; }
.b-get { width: 46px; margin-left: 5px; }
.b-xl { width: 51px; letter-spacing: -.2px; }
.b-get > svg, .b-xl > svg { margin-left: 5px; }
.b-one { width: 82px; letter-spacing: -.15px; }
.collapse { margin: 81px 5px 0 auto; }

.main { flex: 1; display: flex; min-height: 0; }
.rail { width: 41px; background: #f3f2f1; border-right: 1px solid #d8d6d4; border-bottom: 1px solid #d8d6d4; }
.rail i { display: flex; height: 40px; align-items: center; justify-content: center; padding-left: 1px; }
.rail .active { border-left: 3px solid #117865; padding-right: 2px; padding-left: 0; }
.work { width: 1517px; display: flex; flex-direction: column; }
.canvas { flex: 1; position: relative; overflow: hidden; background: #fff; }
.page-frame { position: absolute; left: 25px; top: -10px; width: 1434px; height: 816px; border: 2px dotted #555; }
.page-edge { position: absolute; left: 1484px; top: 0; width: 1px; height: 812px; background: #b5b3b1; }
.v { position: absolute; margin: 0; }
.v-title { left: 179px; top: 17px; font: 400 46px/50px Roboto, sans-serif; letter-spacing: .7px; -webkit-text-stroke: .3px #252423; }
.din { font: 500 43px/44px Roboto, sans-serif; transform-origin: 0 0; transform: scaleX(.88); letter-spacing: 0; }
.din.sm { font-size: 31px; line-height: 32px; }
.kpi1 { left: 93px; top: 191px; } .kpi2 { left: 226px; top: 191px; transform: scaleX(.9); }
.kpi3 { left: 148px; top: 304px; } .kpi4 { left: 256px; top: 304px; transform: scaleX(.9); }
.lbl { font-size: 14.500px; line-height: 19px; letter-spacing: -.5px; }
.k1l { left: 91px; top: 256px; } .k2l { left: 250px; top: 256px; }
.alltime { left: 62px; top: 293px; text-align: center; }
.spend { left: 141px; top: 365px; font-size: 15px; line-height: 20px; letter-spacing: -.45px; font-weight: 700; }
.chart1 { left: 50px; top: 415px; }
.chart2 { left: 409px; top: 415px; }
.ax { font-size: 13px; fill: #605e5c; letter-spacing: 0; }
.end text { text-anchor: end; } .mid text { text-anchor: middle; }
.wh { fill: #fff; }

.matrix { left: 714px; top: 451px; width: 724px; height: 324px; }
.grid { width: 713px; overflow: hidden; font-size: 15px; letter-spacing: -.6px; }
.r { display: grid; grid-template-columns: 162px 68px 69px 70px 77px 69px 69px 69px 69px; height: 21.200px; line-height: 22px; width: 722px; }
.r span { text-align: right; padding-right: 5px; font-weight: 400; word-spacing: 2px; }
.r span i { display: inline-block; width: 9px; height: 12px; border: 1px solid #252423; vertical-align: -1px; }
.r b { font-weight: 400; padding-left: 38px; border-right: 2px solid #6cb8ff; position: relative; letter-spacing: -.35px; }
.head b { padding-left: 5px; border: 0; }
.head span { text-align: left; padding-left: 5px; letter-spacing: -.3px; word-spacing: 1px; }
.head { height: 22px; line-height: 21px; }
.types { height: 30px; border-bottom: 1px solid #118dff; }
.body { height: 240px; overflow: hidden; }
.bold b { padding-left: 26px; }
.bold b, .bold span { font-weight: 700; letter-spacing: -.7px; }
.bold b { letter-spacing: -.5px; }
.bold span { word-spacing: 3px; }
.bold u { position: absolute; left: 6px; top: 5px; width: 10px; height: 10px; border: 1px solid #605e5c; }
.bold u::after { content: ""; display: block; height: 1px; margin: 3.500px 1.500px; background: #605e5c; }
.alt { background: #ececec; }
.total { height: 22px; line-height: 23px; }
.vscroll { position: absolute; left: 714px; top: 0; width: 8px; height: 235px; border-radius: 4px; background: #b0aeac; }
.hscroll { position: absolute; left: 1px; top: 314px; width: 141px; height: 8px; border-radius: 4px; background: #b0aeac; }

.tabs { height: 36px; flex: none; background: #f3f2f1; border-bottom: 1px solid #d8d6d4; display: flex; font-size: 13px; }
.view { width: 24px; margin-left: 10px; padding: 6px 0 0 2px; height: 31px; border-bottom: 3px solid #117865; }
.phone { margin: 5px 0 0 26px; }
.arrows { margin: 12px 7px 0 20px; }
.tab { width: 61px; background: #fff; border-right: 1px solid #c8c6c4; display: flex; align-items: center; justify-content: center; gap: 3px; letter-spacing: -.6px; }
.tab svg { margin-top: 5px; }
.tab.on { width: 119px; border-left: 1px solid #999; border-bottom: 4px solid #117865; letter-spacing: -.75px; word-spacing: 1px; padding-top: 3px; }
.add { width: 39px; height: 32px; margin-top: 2px; background: #117865; display: flex; align-items: center; justify-content: center; }

.vis { width: 181px; background: #f3f2f1; border-left: 1px solid #d8d6d4; border-bottom: 1px solid #d8d6d4; }
.pane-head { display: flex; align-items: center; justify-content: space-between; height: 37px; padding: 1px 7px 0 0; font-size: 16px; letter-spacing: -.4px; }
.vis .pane-head b { width: 106px; display: flex; justify-content: flex-end; }
.build { width: 67px; text-align: right; font-size: 12px; height: 20px; }
.fmt { height: 44px; padding: 3px 0 0 78px; border-bottom: 1px solid #8a8886; }
.icons { display: grid; grid-template-columns: repeat(4, 28px); grid-auto-rows: 28px; padding: 11px 0 0 67px; height: 207px; border-bottom: 1px solid #d0cecc; }
.icons svg { width: 18px; height: 18px; overflow: visible; }
.n123 { font-size: 9px; fill: #1a7fc4; letter-spacing: -.3px; }
.rpy { font-size: 16px; font-weight: 700; fill: #2a8ac4; letter-spacing: 0; }
.values { height: 29px; padding: 6px 12px; }
.well { margin: 0 6px 0 4px; border: 1px dashed #c0bebc; background: #fff; font-size: 12.500px; letter-spacing: -.45px; }
.w1 { height: 28px; line-height: 26px; padding-right: 52px; text-align: right; }
.drill { height: 36px; line-height: 36px; width: 80px; text-align: right; color: #605e5c; }
.opt { height: 24px; margin-top: -5px; display: flex; align-items: center; justify-content: space-between; padding-right: 22px; }
.opt > span:first-child { width: 79px; display: flex; justify-content: flex-end; }
.o2 { margin-top: 2px; } .o2 > span:first-child { width: 85px; }
.tog { width: 32px; height: 16px; border-radius: 8px; border: 1px solid #605e5c; font-size: 10px; display: flex; align-items: center; justify-content: center; gap: 1px; color: #605e5c; }
.tog i { width: 8px; height: 8px; border-radius: 50%; background: #605e5c; }
.tog.on { background: #117865; border-color: #117865; color: #fff; gap: 4px; }
.tog.on i { background: #fff; }
.w2 { margin-top: 6px; height: 25px; line-height: 24px; text-align: center; }

.data { width: 181px; background: #f3f2f1; border-left: 1px solid #d8d6d4; border-bottom: 1px solid #d8d6d4; }
.data .pane-head { padding-left: 7px; }
.search { margin: 8px 4px 0 4px; height: 27px; border: 1px solid #605e5c; border-radius: 2px; display: flex; align-items: center; gap: 6px; padding-left: 7px; font-size: 13px; letter-spacing: -.3px; color: #444; }
.tree { list-style: none; margin: 9px 0 0; padding: 0; }
.tree li { height: 24px; display: flex; align-items: center; padding-left: 38px; white-space: nowrap; position: relative; letter-spacing: -.25px; }
.tree i { width: 12px; height: 12px; border: 1px solid #8a8886; border-radius: 2px; flex: none; }
.tree em { width: 13px; margin: 0 5px 0 8px; flex: none; }
.tree .t { padding-left: 6px; }
.chv { width: 14px; height: 14px; margin-right: 3px; }
.ti { width: 13px; height: 13px; margin-right: 4px; }
.tree .exp { padding-left: 25px; }
.exp > svg:first-child { margin-right: 5px; }

.status { height: 23px; flex: none; background: #f3f2f1; display: flex; align-items: center; color: #444; padding: 0 19px 0 5px; }
.pg { margin-right: auto; letter-spacing: -.05px; }
.pct { margin: 0 12px 0 14px; letter-spacing: -.4px; }

.taskbar { height: 49px; flex: none; background: #1c1c1c; border-top: 1px solid #000; box-shadow: inset 0 1px #3a3a3a; display: flex; align-items: center; color: #fff; position: relative; letter-spacing: -.2px; }
.sun { margin: 0 7px 0 19px; }
.weather { width: 60px; }
.weather span { color: #bbb; }
.start { margin-left: 595px; margin-top: 3px; }
.tsearch { margin-left: 13px; width: 220px; height: 33px; margin-top: 2px; border-radius: 17px; background: #3a3a3a; border: 1px solid #484848; border-top-color: #666; display: flex; align-items: center; padding: 0 5px 0 11px; color: #ccc; font-size: 13px; }
.tsearch span { margin: 0 auto 0 10px; }
.cop { margin-left: 13px; margin-top: 2px; }
.edge { margin-left: 20px; margin-top: 2px; }
.files { margin-left: 19px; margin-top: 2px; }
.opera { margin-left: 20px; margin-top: 1px; }
.pbi { margin-left: 13px; margin-top: 2px; width: 40px; height: 42px; background: #282828; border: 1px solid #333; border-radius: 4px; display: flex; align-items: center; justify-content: center; }
.bit { margin-left: 12px; margin-top: 1px; }
.pre { font-size: 6.500px; font-weight: 700; letter-spacing: 0; }
.tray { margin-left: auto; display: flex; align-items: center; padding-right: 21px; }
.lang { width: 30px; text-align: center; margin: 0 14px 0 18px; }
.spk { margin-left: 6px; } .bat { margin-left: 7px; }
.clock { width: 79px; text-align: right; margin-right: 9px; letter-spacing: -.25px; }
.ind { position: absolute; top: 42px; width: 6px; height: 3px; border-radius: 2px; background: #9a9a9a; }
.i1 { left: 1026px; } .i2 { left: 1153px; width: 16px; background: #f2795a; } .i3 { left: 1202px; }

.tip { position: absolute; left: 340px; top: 0; width: 1282px; height: 618px; z-index: 5; background: #fff; border: 1px solid #33373a; border-top: 0; }
.lb { font-size: 12px; fill: #605e5c; letter-spacing: 0; }
.tip-arrow { position: absolute; left: 333px; top: 597px; z-index: 6; border: 7px solid transparent; border-right-color: #33373a; border-left: 0; }
```
